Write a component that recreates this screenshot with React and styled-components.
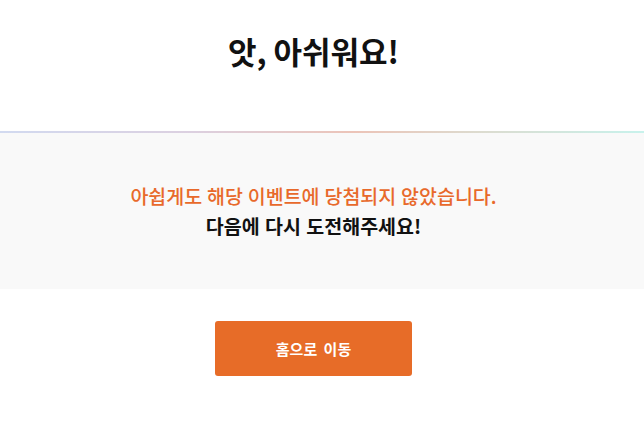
import React from 'react'
import styled, { createGlobalStyle } from 'styled-components'

const GlobalStyle = createGlobalStyle`
  html, body {
    margin: 0;
    padding: 0;
    background: #ffffff;
    font-family: "Noto Sans CJK KR", "Noto Sans", sans-serif;
  }
`

const Page = styled.div`
  width: 644px;
  display: flex;
  flex-direction: column;
`

const Header = styled.header`
  height: 131px;
  display: flex;
  justify-content: center;
  align-items: flex-start;
  padding: 27px 17px 0 0;
  box-sizing: border-box;
`

const Title = styled.h1`
  margin: 0;
  font-size: 31px;
  font-weight: 700;
  color: #111;
  line-height: 48px;
`

const Line = styled.div`
  height: 2px;
  background: linear-gradient(90deg, #d2daf0 0%, #dcd0e0 30%, #ecc4b8 55%, #dcdcd0 75%, #c8f2ec 100%);
`

const Notice = styled.section`
  background: #f9f9f9;
  height: 156px;
  display: flex;
  flex-direction: column;
  align-items: center;
  justify-content: center;
  padding: 0 17px 0 0;
  box-sizing: border-box;
`

const Message = styled.p`
  margin: 0;
  font-size: ${({ $size }) => $size}px;
  font-weight: ${({ $accent }) => ($accent ? 500 : 700)};
  word-spacing: ${({ $gap }) => $gap}px;
  line-height: 30px;
  color: ${({ $accent }) => ($accent ? '#e8692b' : '#111')};
`

const Footer = styled.div`
  display: flex;
  justify-content: center;
  padding: 32px 17px 0 0;
`

const HomeButton = styled.button`
  width: 197px;
  height: 55px;
  border: none;
  border-radius: 3px;
  background: #e76c28;
  color: #fff;
  font-family: inherit;
  font-size: 15px;
  font-weight: 700;
  word-spacing: 3px;
  cursor: pointer;
`

export default function App() {
  return (
    <>
      <GlobalStyle />
      <Page>
        <Header>
          <Title>앗, 아쉬워요!</Title>
        </Header>
        <Line />
        <Notice>
          <Message $accent $size={19.5} $gap={0.5}>아쉽게도 해당 이벤트에 당첨되지 않았습니다.</Message>
          <Message $size={19.5} $gap={1}>다음에 다시 도전해주세요!</Message>
        </Notice>
        <Footer>
          <HomeButton>홈으로 이동</HomeButton>
        </Footer>
      </Page>
    </>
  )
}
